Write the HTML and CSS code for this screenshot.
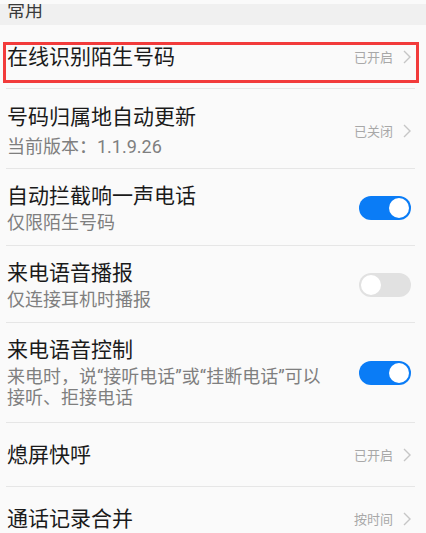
FILE: index.html
```html
<!DOCTYPE html>
<html lang="zh-CN">
<head>
<meta charset="utf-8">
<link rel="stylesheet" href="styles.css">
</head>
<body>
<div class="page">
  <div class="section-head"><span>常用</span></div>
  <ul class="list">
    <li class="row single highlight-host">
      <div class="text"><div class="title">在线识别陌生号码</div></div>
      <div class="value">已开启<svg class="chev" viewBox="0 0 8 14" width="8" height="14"><polyline points="1,1 7,7 1,13"/></svg></div>
      <div class="highlight"></div>
    </li>
    <li class="row double tall">
      <div class="text">
        <div class="title">号码归属地自动更新</div>
        <div class="sub">当前版本：1.1.9.26</div>
      </div>
      <div class="value">已关闭<svg class="chev" viewBox="0 0 8 14" width="8" height="14"><polyline points="1,1 7,7 1,13"/></svg></div>
    </li>
    <li class="row double">
      <div class="text">
        <div class="title">自动拦截响一声电话</div>
        <div class="sub">仅限陌生号码</div>
      </div>
      <div class="switch on"><span class="knob"></span></div>
    </li>
    <li class="row double">
      <div class="text">
        <div class="title">来电语音播报</div>
        <div class="sub">仅连接耳机时播报</div>
      </div>
      <div class="switch off"><span class="knob"></span></div>
    </li>
    <li class="row double triple">
      <div class="text">
        <div class="title">来电语音控制</div>
        <div class="sub">来电时，说“接听电话”或“挂断电话”可以<br>接听、拒接电话</div>
      </div>
      <div class="switch on"><span class="knob"></span></div>
    </li>
    <li class="row single">
      <div class="text"><div class="title">熄屏快呼</div></div>
      <div class="value">已开启<svg class="chev" viewBox="0 0 8 14" width="8" height="14"><polyline points="1,1 7,7 1,13"/></svg></div>
    </li>
    <li class="row single">
      <div class="text"><div class="title">通话记录合并</div></div>
      <div class="value">按时间<svg class="chev" viewBox="0 0 8 14" width="8" height="14"><polyline points="1,1 7,7 1,13"/></svg></div>
    </li>
  </ul>
</div>
</body>
</html>
```
FILE: styles.css
```css
* { box-sizing: border-box; }
html, body { margin: 0; padding: 0; }
body {
  background: #fafafa;
  font-family: Roboto, "Noto Sans CJK SC", sans-serif;
  color: #1a1a1a;
  overflow: hidden;
}
.page { width: 426px; height: 533px; overflow: hidden; }
.section-head {
  height: 25px;
  border-top: 4px solid #fafafa;
  background: #f0f0f0;
  padding-left: 7px;
  font-size: 18px;
  line-height: 13px;
  color: #3a3a3a;
  overflow: hidden;
}
.list { list-style: none; margin: 0 11px 0 6px; padding: 0; }
.row {
  display: flex;
  align-items: center;
  gap: 16px;
  padding: 0 4px 0 1px;
  border-bottom: 1px solid #e6e6e6;
}
.row.single { height: 64px; }
.row.double { padding-top: 14px; padding-bottom: 12px; }
.row.tall { padding-top: 15px; padding-bottom: 11px; }
.row.tall .sub { margin-top: 6px; }
.row.triple { padding-bottom: 14px; }
.text { flex: 1; min-width: 0; }
.title { font-size: 21px; line-height: 26px; color: #1a1a1a; }
.sub { margin-top: 3px; font-size: 18px; line-height: 21px; color: #7f7f7f; }
.value {
  display: flex;
  align-items: center;
  gap: 10px;
  font-size: 13px;
  color: #a8a8a8;
}
.chev { fill: none; stroke: #c6c6c6; stroke-width: 1.4; }
.switch {
  position: relative;
  width: 52px;
  height: 24px;
  border-radius: 12px;
  flex: none;
}
.switch.on { background: #0a7cf6; }
.switch.off { background: #e1e1e1; }
.knob {
  position: absolute;
  top: 2px;
  width: 20px;
  height: 20px;
  border-radius: 50%;
  background: #ffffff;
}
.switch.on .knob { right: 2px; }
.switch.off .knob { left: 2px; }
.highlight-host { position: relative; }
.highlight {
  position: absolute;
  left: -3px;
  right: -4px;
  top: 17px;
  height: 41px;
  border: 3px solid #f23b3b;
  pointer-events: none;
}
```
